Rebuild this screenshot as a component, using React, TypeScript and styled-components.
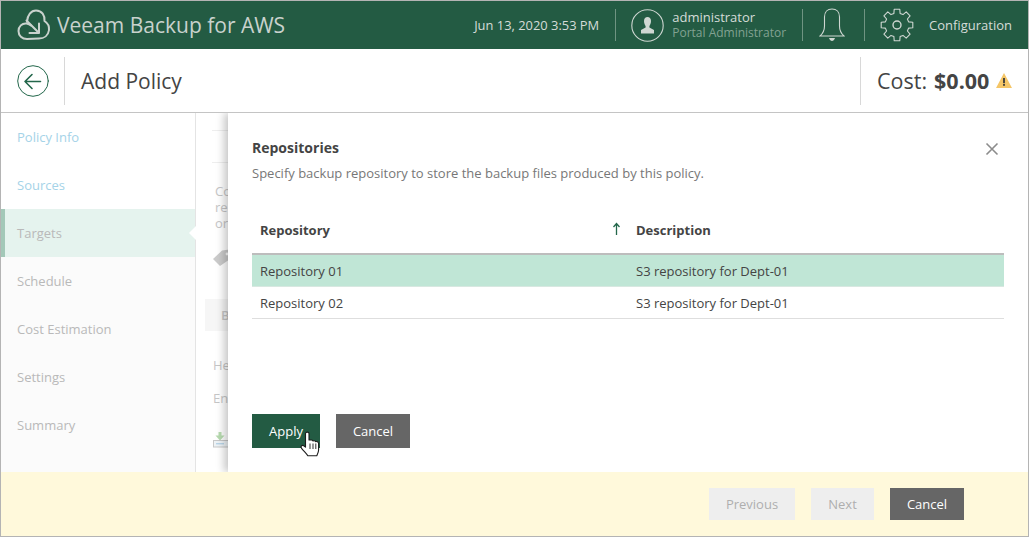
import React from 'react'
import styled, { createGlobalStyle } from 'styled-components'

const GlobalStyle = createGlobalStyle`
  html, body { margin: 0; padding: 0; background: #fff; }
  body { font-family: "Open Sans", "Liberation Sans", sans-serif; color: #444; }
  * { box-sizing: border-box; }
`

const Frame = styled.div`
  position: relative;
  width: 1029px;
  height: 537px;
  border: 1px solid #b4b4b4;
  display: flex;
  flex-direction: column;
  overflow: hidden;
`

const Header = styled.header`
  height: 48px;
  flex: none;
  background: #235b43;
  display: flex;
  align-items: center;
  color: #d6dcd8;
`

const Brand = styled.div`
  display: flex;
  align-items: center;
  margin-left: 16px;
  gap: 6px;
  font-size: 21px;
  color: #c9d2cd;
  flex: 1;
`

const HeaderDate = styled.span`
  font-size: 12.9px;
  color: #d5dcd8;
`

const VLine = styled.span<{ $ml: number; $mr: number }>`
  width: 1px;
  height: 32px;
  background: #6f9482;
  margin-left: ${p => p.$ml}px;
  margin-right: ${p => p.$mr}px;
`

const UserBlock = styled.div`
  display: flex;
  flex-direction: column;
  margin-left: 8px;
  line-height: 15px;
`

const UserName = styled.span`
  font-size: 13px;
  color: #d5dcd8;
`

const UserRole = styled.span`
  font-size: 12px;
  color: #82a292;
`

const ConfigLabel = styled.span`
  font-size: 13px;
  color: #d5dcd8;
  margin-left: 15px;
  margin-right: 16px;
`

const SubHeader = styled.div`
  height: 64px;
  flex: none;
  border-bottom: 1px solid #c4c4c4;
  display: flex;
  align-items: center;
`

const BackWrap = styled.div`
  width: 64px;
  height: 48px;
  display: flex;
  align-items: center;
  padding-left: 16px;
  border-right: 1px solid #d8d8d8;
`

const PageTitle = styled.h1`
  margin: 0 0 0 16px;
  font-size: 21px;
  font-weight: 400;
  color: #444;
  flex: 1;
`

const CostBox = styled.div`
  height: 48px;
  width: 168px;
  border-left: 1px solid #d8d8d8;
  display: flex;
  align-items: center;
  padding-left: 16px;
  font-size: 21.5px;
  color: #444;
  gap: 6px;
`

const CostValue = styled.b`
  font-weight: 700;
  margin: 0 1px 0 1px;
`

const Main = styled.div`
  flex: 1;
  display: flex;
  min-height: 0;
`

const Nav = styled.nav`
  width: 195px;
  flex: none;
  display: flex;
  flex-direction: column;
  background: #fbfbfb;
  border-right: 1px solid #e4e4e4;
`

const NavItem = styled.div<{ $state?: 'done' | 'active' }>`
  position: relative;
  height: 48px;
  display: flex;
  align-items: center;
  padding-left: 16px;
  font-size: 13px;
  color: ${p => (p.$state === 'done' ? '#a5d3e8' : '#b9b9b9')};
  background: ${p => (p.$state === 'active' ? '#e5f3ee' : p.$state === 'done' ? '#fff' : 'transparent')};
  border-left: ${p => (p.$state === 'active' ? '4px solid #a3c8b8' : 'none')};
  padding-left: ${p => (p.$state === 'active' ? '12px' : '16px')};
  ${p =>
    p.$state === 'active'
      ? `&::after {
          content: '';
          position: absolute;
          right: -1px;
          top: 17px;
          border: 7px solid transparent;
          border-right-color: #fff;
          border-left-width: 0;
        }`
      : ''}
`

const Behind = styled.div`
  flex: 1;
  padding: 0 0 0 9px;
  font-size: 13px;
  color: #c6c6c6;
  min-width: 0;
  overflow: hidden;
`

const Rule = styled.div<{ $mt: number }>`
  height: 1px;
  background: #eeeeee;
  margin-top: ${p => p.$mt}px;
  margin-left: 7px;
`

const BehindText = styled.div`
  margin-top: 20px;
  margin-left: 10px;
  line-height: 16px;
`

const BehindTag = styled.div`
  margin: 18px 0 0 8px;
  height: 22px;
`

const BehindBar = styled.div`
  margin-top: 28px;
  height: 32px;
  background: #f6f6f6;
  padding-left: 16px;
  line-height: 32px;
  font-weight: 600;
`

const BehindLine = styled.div<{ $mt: number }>`
  margin-top: ${p => p.$mt}px;
  margin-left: 8px;
  line-height: 16px;
`

const BehindIcon = styled.div`
  margin: 26px 0 0 8px;
  height: 20px;
`

const Footer = styled.footer`
  height: 64px;
  flex: none;
  background: #fff9db;
  display: flex;
  align-items: center;
  justify-content: flex-end;
  padding-right: 64px;
  gap: 16px;
`

const Button = styled.button<{ $kind: 'primary' | 'dark' | 'disabled'; $w: number }>`
  width: ${p => p.$w}px;
  height: ${p => (p.$kind === 'disabled' ? 32 : 34)}px;
  border: 0;
  padding: 0;
  font-family: inherit;
  font-size: 13px;
  background: ${p => (p.$kind === 'primary' ? '#235b43' : p.$kind === 'dark' ? '#666' : '#eee')};
  color: ${p => (p.$kind === 'disabled' ? '#aeaeae' : '#fff')};
`

const FooterCancel = styled(Button)`
  height: 32px;
`

const Dialog = styled.section`
  position: absolute;
  left: 227px;
  top: 112px;
  right: 0;
  height: 359px;
  background: #fff;
  box-shadow: -4px 0 8px rgba(0, 0, 0, 0.22);
  clip-path: inset(0 0 0 -14px);
  padding: 25px 24px 0;
  display: flex;
  flex-direction: column;
`

const DialogHead = styled.div`
  display: flex;
  justify-content: space-between;
`

const DialogTitle = styled.h2`
  margin: 0;
  font-size: 14px;
  line-height: 20px;
  font-weight: 700;
  color: #444;
`

const DialogSub = styled.p`
  margin: 8px 0 0;
  font-size: 13px;
  line-height: 14px;
  color: #777;
`

const CloseBtn = styled.span`
  display: block;
  margin: 1px 5px 0 0;
  height: 14px;
`

const Table = styled.div`
  margin-top: 26px;
  display: flex;
  flex-direction: column;
`

const Row = styled.div<{ $kind: 'head' | 'selected' | 'plain' }>`
  display: grid;
  grid-template-columns: 376px 1fr;
  align-items: center;
  height: ${p => (p.$kind === 'head' ? 49 : 32)}px;
  font-size: 13px;
  color: #444;
  font-weight: ${p => (p.$kind === 'head' ? 700 : 400)};
  background: ${p => (p.$kind === 'selected' ? '#c0e6d6' : 'transparent')};
  border-bottom: ${p =>
    p.$kind === 'head' ? '2px solid #bdbdbd' : p.$kind === 'selected' ? '1px solid #d8e8e1' : '1px solid #dedede'};
`

const Cell = styled.span`
  padding-left: 8px;
  position: relative;
`

const SortIcon = styled.svg`
  position: absolute;
  right: 7px;
  top: 1px;
`

const DialogActions = styled.div`
  margin-top: 95px;
  display: flex;
  gap: 16px;
  position: relative;
`

const Cursor = styled.svg`
  position: absolute;
  left: 48px;
  top: 17px;
`

const gearPath = (() => {
  // 8 square-ish teeth around the centre of a 34 box
  const pts: string[] = []
  const at = (r: number, deg: number) => {
    const a = (deg * Math.PI) / 180
    return `${(17 + r * Math.cos(a)).toFixed(1)} ${(17 + r * Math.sin(a)).toFixed(1)}`
  }
  for (let i = 0; i < 8; i++) {
    const c = i * 45 - 90
    pts.push(at(12, c - 15), at(16, c - 10), at(16, c + 10), at(12, c + 15))
  }
  return `M${pts.join(' L')} Z`
})()

const CloudLogo = () => (
  <svg width="34" height="34" viewBox="0 0 34 34" fill="none" stroke="#c9d2cd" strokeWidth="2" strokeLinecap="round" strokeLinejoin="round">
    <path d="M10 13.5 C10.5 7 14 2.5 19 2.5 C25 2.5 28 7.5 27.5 13 C30.5 15 32.5 18 32 22 C31.3 27.5 27 30.5 22 30.5 L10 31 C5 31 1.5 27.5 1.5 23 C1.5 18.5 5 15 9.5 15.5 C11.5 15.8 13 16.5 14 17.5" />
    <path d="M9.5 12.5 L22 25 M22 15.5 V25 H12.5" />
  </svg>
)

const BackIcon = () => (
  <svg width="32" height="32" viewBox="0 0 32 32" fill="none" stroke="#23674b" strokeLinecap="round">
    <circle cx="16" cy="16" r="15.3" strokeWidth="1" />
    <path d="M8 16.5 H23.5 M8 16.5 L15 9.5 M8 16.5 L15 23.5" strokeWidth="1.6" />
  </svg>
)

const UserIcon = () => (
  <svg width="33" height="33" viewBox="0 0 33 33" fill="none">
    <circle cx="16.5" cy="16.5" r="15.7" stroke="#cfd7d2" strokeWidth="1.1" />
    <path d="M13 12 C13 9.5 14.5 8 16.5 8 C18.5 8 20 9.5 20 12 C20 14.5 19 16 18.4 17 L18.4 18.5 L23 21 L23 24.5 L10 24.5 L10 21 L14.6 18.5 L14.6 17 C14 16 13 14.5 13 12 Z" fill="#cfd7d2" />
  </svg>
)

const BellIcon = () => (
  <svg width="26" height="34" viewBox="0 0 26 34" fill="none" stroke="#cfd7d2" strokeWidth="1.1">
    <path d="M1 28 C4.5 25 5.5 22 5.5 18 L5.5 9 C5.5 4 8.5 1 13 1 C17.5 1 20.5 4 20.5 9 L20.5 18 C20.5 22 21.5 25 25 28 Z" />
    <path d="M10 30 H16 C15.5 32 14 33 13 33 C12 33 10.5 32 10 30 Z" fill="#cfd7d2" stroke="none" />
  </svg>
)

const GearIcon = () => (
  <svg width="34" height="34" viewBox="0 0 34 34" fill="none" stroke="#cfd7d2" strokeWidth="1.1" strokeLinejoin="round">
    <path d={gearPath} />
    <circle cx="17" cy="17" r="4" strokeWidth="1.4" />
  </svg>
)

const WarnIcon = () => (
  <svg width="16" height="15" viewBox="0 0 16 15">
    <path d="M8 0 L16 15 H0 Z" fill="#f5c667" />
    <rect x="7.1" y="5" width="1.8" height="5.2" fill="#3a3a3a" />
    <rect x="7.1" y="11" width="1.8" height="1.8" fill="#3a3a3a" />
  </svg>
)

const TagIcon = () => (
  <svg width="20" height="20" viewBox="0 0 20 20">
    <path d="M0 10 L9 1.5 L20 0 L20 8 L7 17 Z" fill="#cbcbcb" />
    <circle cx="14" cy="5" r="1.4" fill="#fff" />
  </svg>
)

const ImportIcon = () => (
  <svg width="20" height="16" viewBox="0 0 20 16" fill="none">
    <path d="M5.5 0 H8.5 V3.5 H11.5 L7 8.5 L2.5 3.5 H5.5 Z" fill="#b7dbb0" />
    <rect x="0.5" y="8.5" width="19" height="6.5" fill="#eef3f6" stroke="#c8c8c8" />
    <rect x="3" y="11" width="8" height="1.4" fill="#b9d5e8" />
  </svg>
)

const CloseIcon = () => (
  <svg width="14" height="14" viewBox="0 0 14 14" stroke="#8c8c8c" strokeWidth="1.6">
    <path d="M1.5 1.5 L12.5 12.5 M12.5 1.5 L1.5 12.5" />
  </svg>
)

const HandCursor = () => (
  <Cursor width="20" height="26" viewBox="0 0 20 26">
    <path
      d="M5.5 2.5 C5.5 0.6 9 0.6 9 2.5 L9 9 L11.5 9 C12.5 9 13 9.6 13 10 C13.5 9.6 15.2 9.6 15.6 10.6 C16.5 10.4 18.6 10.8 18.6 12.6 L18.6 19 C18.6 21 17.8 22.6 16.8 24.8 L7.8 24.8 C6.6 22.6 4 20.4 1.6 17.4 C0.2 15.6 2 13.6 3.8 14.8 L5.5 16.2 Z"
      fill="#fff"
      stroke="#1c1c1c"
      strokeWidth="1.1"
      strokeLinejoin="round"
    />
    <path d="M10 12.5 V18 M13 12.5 V18 M15.8 12.5 V18" stroke="#1c1c1c" strokeWidth="0.9" />
  </Cursor>
)

const navItems: { label: string; state?: 'done' | 'active' }[] = [
  { label: 'Policy Info', state: 'done' },
  { label: 'Sources', state: 'done' },
  { label: 'Targets', state: 'active' },
  { label: 'Schedule' },
  { label: 'Cost Estimation' },
  { label: 'Settings' },
  { label: 'Summary' },
]

const App = () => {
  return (
    <>
      <GlobalStyle />
      <Frame>
        <Header>
          <Brand>
            <CloudLogo />
            <span>Veeam Backup for AWS</span>
          </Brand>
          <HeaderDate>Jun 13, 2020 3:53 PM</HeaderDate>
          <VLine $ml={16} $mr={15} />
          <UserIcon />
          <UserBlock>
            <UserName>administrator</UserName>
            <UserRole>Portal Administrator</UserRole>
          </UserBlock>
          <VLine $ml={16} $mr={16} />
          <BellIcon />
          <VLine $ml={19} $mr={15} />
          <GearIcon />
          <ConfigLabel>Configuration</ConfigLabel>
        </Header>
        <SubHeader>
          <BackWrap>
            <BackIcon />
          </BackWrap>
          <PageTitle>Add Policy</PageTitle>
          <CostBox>
            <span>Cost:</span>
            <CostValue>$0.00</CostValue>
            <WarnIcon />
          </CostBox>
        </SubHeader>
        <Main>
          <Nav>
            {navItems.map(item => (
              <NavItem key={item.label} $state={item.state}>
                {item.label}
              </NavItem>
            ))}
          </Nav>
          <Behind>
            <Rule $mt={17} />
            <Rule $mt={31} />
            <BehindText>
              Co
              <br />
              re
              <br />
              or
            </BehindText>
            <BehindTag>
              <TagIcon />
            </BehindTag>
            <BehindBar>B</BehindBar>
            <BehindLine $mt={26}>He</BehindLine>
            <BehindLine $mt={17}>En</BehindLine>
            <BehindIcon>
              <ImportIcon />
            </BehindIcon>
          </Behind>
        </Main>
        <Footer>
          <Button $kind="disabled" $w={86}>Previous</Button>
          <Button $kind="disabled" $w={63}>Next</Button>
          <FooterCancel $kind="dark" $w={74}>Cancel</FooterCancel>
        </Footer>
        <Dialog>
          <DialogHead>
            <div>
              <DialogTitle>Repositories</DialogTitle>
              <DialogSub>Specify backup repository to store the backup files produced by this policy.</DialogSub>
            </div>
            <CloseBtn>
              <CloseIcon />
            </CloseBtn>
          </DialogHead>
          <Table>
            <Row $kind="head">
              <Cell>
                Repository
                <SortIcon width="9" height="14" viewBox="0 0 9 14" fill="none" stroke="#23674b" strokeWidth="1.3">
                  <path d="M4.5 13 V2 M1.5 5 L4.5 1.5 L7.5 5" />
                </SortIcon>
              </Cell>
              <Cell>Description</Cell>
            </Row>
            <Row $kind="selected">
              <Cell>Repository 01</Cell>
              <Cell>S3 repository for Dept-01</Cell>
            </Row>
            <Row $kind="plain">
              <Cell>Repository 02</Cell>
              <Cell>S3 repository for Dept-01</Cell>
            </Row>
          </Table>
          <DialogActions>
            <Button $kind="primary" $w={68}>Apply</Button>
            <Button $kind="dark" $w={74}>Cancel</Button>
            <HandCursor />
          </DialogActions>
        </Dialog>
      </Frame>
    </>
  )
}

export default App
